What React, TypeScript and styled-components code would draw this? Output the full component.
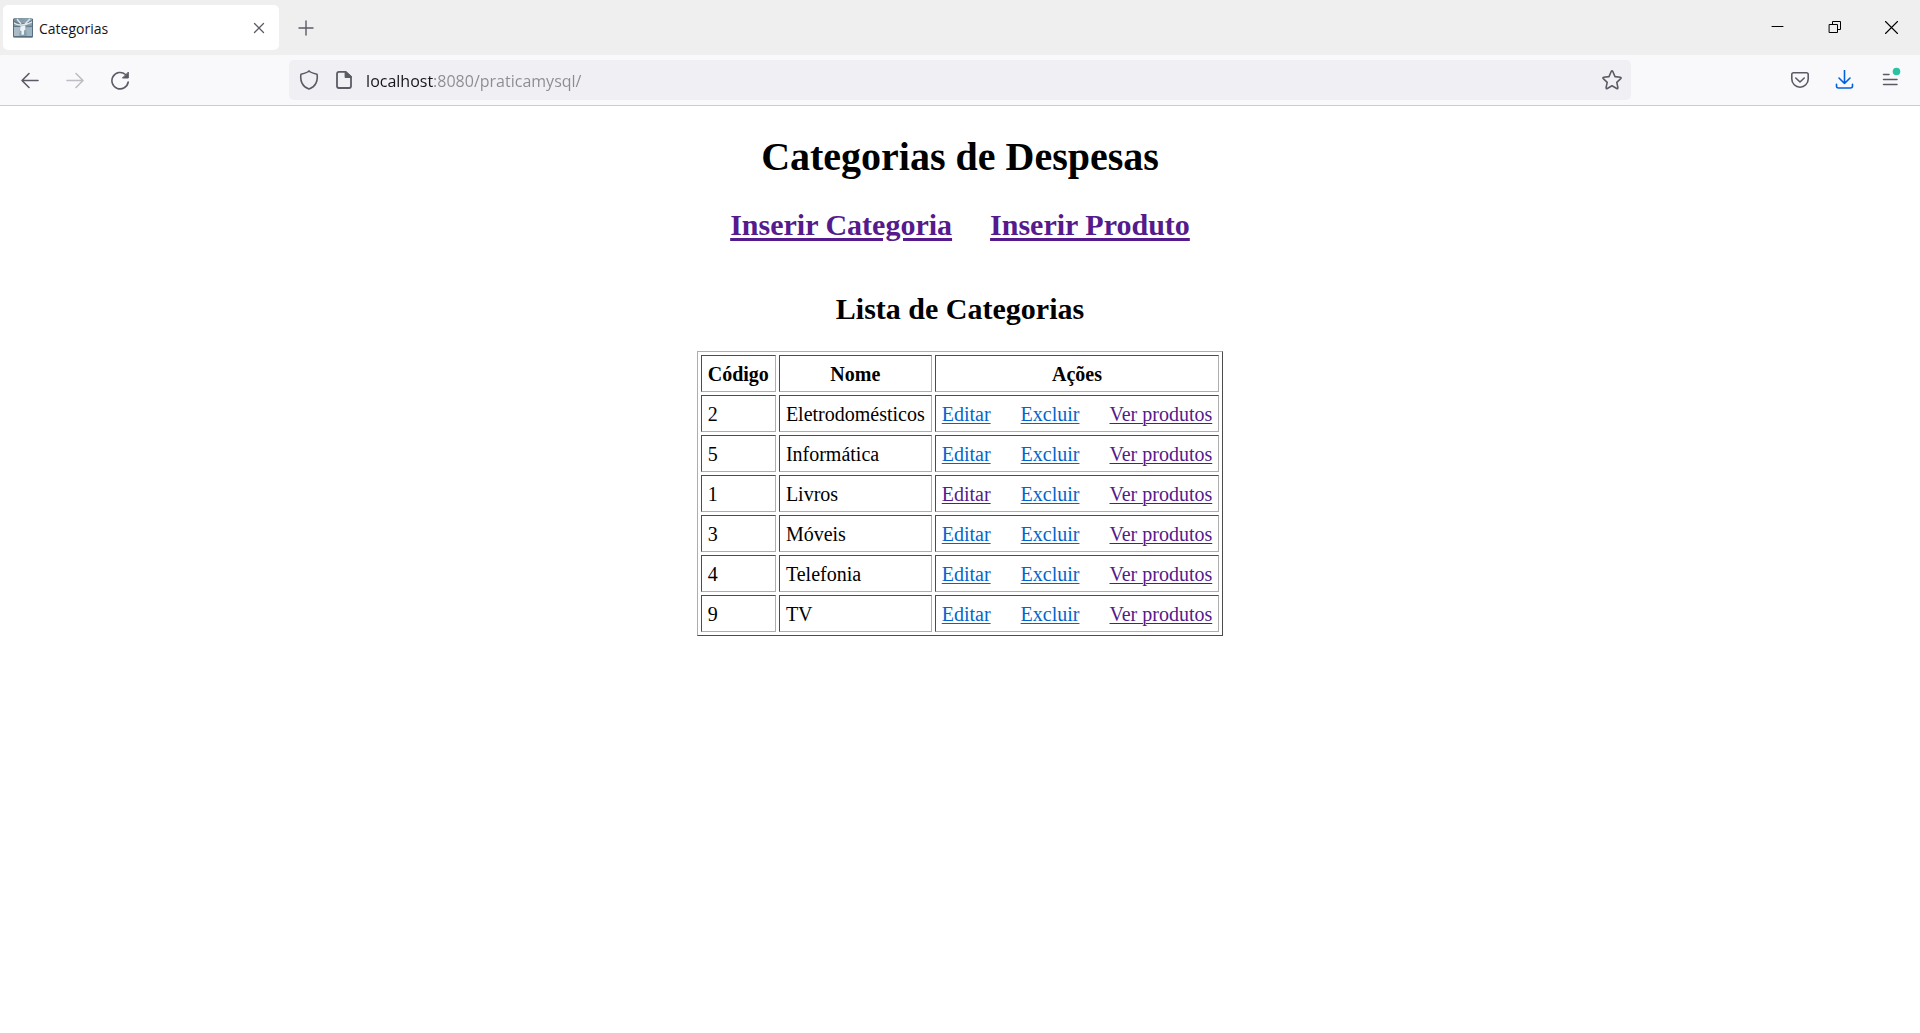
import React from "react";
import styled, { createGlobalStyle } from "styled-components";

const GlobalStyle = createGlobalStyle`
  body {
    margin: 0;
    background: #ffffff;
    color: #000000;
    font-family: "Liberation Serif", "Times New Roman", serif;
    font-size: 20px;
  }
`;

const Chrome = styled.header`
  font-family: "Open Sans", "Segoe UI", sans-serif;
  border-bottom: 1px solid #cccccc;
  background: #f9f9fb;
  color: #5b5b66;
`;

const TabBar = styled.div`
  display: flex;
  align-items: stretch;
  height: 55px;
  background: #efefef;
`;

const Tab = styled.div`
  display: flex;
  align-items: center;
  gap: 6px;
  width: 276px;
  margin: 5px 3px;
  padding: 0 5px 0 10px;
  box-sizing: border-box;
  border-radius: 5px;
  background: #ffffff;
`;

const TabTitle = styled.span`
  flex: 1;
  padding-top: 2px;
  color: #15141a;
  font-size: 14px;
  line-height: 20px;
`;

const IconButton = styled.button<{ $width: number; $color?: string }>`
  display: inline-flex;
  align-items: center;
  justify-content: center;
  width: ${(p) => p.$width}px;
  padding: 0;
  border: 0;
  background: transparent;
  color: ${(p) => p.$color ?? "#5b5b66"};

  &:disabled {
    color: #bdbdc3;
  }
`;

const WindowControls = styled.div`
  display: flex;
  height: 55px;
  margin-left: auto;
`;

const Toolbar = styled.nav`
  display: flex;
  align-items: center;
  height: 50px;
  padding: 0 10px;
`;

const ButtonGroup = styled.div`
  display: flex;
  gap: 5px;
  height: 40px;
`;

const Spring = styled.div`
  flex: 1 1 0;
`;

const AddressBar = styled.div`
  display: flex;
  flex: 9 1 0;
  align-items: stretch;
  min-width: 0;
  height: 40px;
  border-radius: 5px;
  background: #f0f0f4;
`;

const AddressInput = styled.input`
  flex: 1;
  min-width: 0;
  margin-left: 5px;
  padding: 2px 0 0;
  border: 0;
  outline: 0;
  font-family: inherit;
  font-size: 16px;
  color: #8b8b90;
  background: linear-gradient(to right, #15141a 68px, #8b8b90 68px);
  background-clip: text;
  -webkit-background-clip: text;
  -webkit-text-fill-color: transparent;
`;

const Page = styled.main`
  display: flex;
  flex-direction: column;
  align-items: center;
`;

const Title = styled.h1`
  margin: 28px 0;
  font-size: 40px;
  line-height: 46px;
`;

const Link = styled.a<{ $visited?: boolean }>`
  color: ${(p) => (p.$visited ? "#551a8b" : "#0066cc")};
  text-decoration: underline;
  text-decoration-thickness: 1px;
  text-underline-offset: 2px;
`;

const Heading = styled.h2`
  display: flex;
  gap: 38px;
  margin: 0 0 25px;
  font-size: 30px;
  line-height: 34px;

  ${Link} {
    text-decoration-thickness: 3px;
    text-underline-offset: 3px;
  }
`;

const ListSection = styled.section`
  display: flex;
  flex-direction: column;
  align-items: center;
  margin-top: 25px;
`;

const Table = styled.table`
  border: 1px solid;
  border-color: #aeaeae #4c4c4c #4c4c4c #aeaeae;
  border-collapse: separate;
  border-spacing: 3px;
  line-height: 23px;
`;

const HeaderCell = styled.th`
  padding: 7px 6px 5px;
  border: 1px solid;
  border-color: #4c4c4c #aeaeae #aeaeae #4c4c4c;
`;

const Cell = styled.td`
  padding: 7px 6px 5px;
  border: 1px solid;
  border-color: #4c4c4c #aeaeae #aeaeae #4c4c4c;
`;

const Actions = styled.div`
  display: flex;
  gap: 30px;
`;

type IconProps = { size: number; stroke?: number; children: React.ReactNode };

const Icon = ({ size, stroke = 1.6, children }: IconProps) => (
  <svg
    width={size}
    height={size}
    viewBox={`0 0 ${size} ${size}`}
    fill="none"
    stroke="currentColor"
    strokeWidth={stroke}
    strokeLinecap="round"
    strokeLinejoin="round"
    aria-hidden="true"
  >
    {children}
  </svg>
);

const Favicon = () => (
  <svg width="20" height="20" viewBox="0 0 20 20" aria-hidden="true">
    <defs>
      <linearGradient id="fav" x1="0" y1="0" x2="1" y2="1">
        <stop offset="0" stopColor="#7b8d9a" />
        <stop offset="0.5" stopColor="#91a8b6" />
        <stop offset="1" stopColor="#7895a8" />
      </linearGradient>
    </defs>
    <rect width="20" height="20" rx="1.5" fill="url(#fav)" />
    <path d="M0 9l7 0-1 10H0z" fill="#a9bcc7" />
    <path d="M13 10l6-1v9l-5 1z" fill="#9db5c3" />
    <path d="M0 2.500Q4 5.500 9 6T20 2" fill="none" stroke="#5b6d7b" strokeWidth="1" />
    <path d="M0 4.500Q4 7.500 9 7T20 3.500M4 1l4 5M17 1l-5 5" fill="none" stroke="#dfe7eb" strokeWidth="1.300" />
    <path d="M0 8.500h7M13 8l7 .5" stroke="#5f7484" strokeWidth="1" />
    <path d="M7.500 8.500l4.500-1 .5 4-1.500 1v4l-2.500.5v-4l-1.500-.5z" fill="#edf3f5" />
    <path d="M.5 1v17.500h19V1" fill="none" stroke="#5a6d7d" strokeWidth="1" />
  </svg>
);

const categories = [
  { code: 2, name: "Eletrodomésticos" },
  { code: 5, name: "Informática" },
  { code: 1, name: "Livros", edited: true },
  { code: 3, name: "Móveis" },
  { code: 4, name: "Telefonia" },
  { code: 9, name: "TV" },
];

const BrowserChrome = () => (
  <Chrome>
    <TabBar>
      <Tab>
        <Favicon />
        <TabTitle>Categorias</TabTitle>
        <IconButton $width={30} aria-label="Fechar aba">
          <Icon size={20} stroke={1.3}><path d="M5.500 5.500l9 9M14.500 5.500l-9 9" /></Icon>
        </IconButton>
      </Tab>
      <IconButton $width={47} aria-label="Nova aba">
        <Icon size={20} stroke={1.4}><path d="M10 3v14M3 10h14" /></Icon>
      </IconButton>
      <WindowControls>
        <IconButton $width={57} $color="#000000" aria-label="Minimizar">
          <Icon size={13} stroke={1}><path d="M1 5.500h11" /></Icon>
        </IconButton>
        <IconButton $width={57} $color="#000000" aria-label="Restaurar">
          <Icon size={13} stroke={1}>
            <path d="M1.500 3.500h8v8h-8zM4.500 3.500v-3h8v8h-3" strokeLinejoin="miter" />
          </Icon>
        </IconButton>
        <IconButton $width={57} $color="#000000" aria-label="Fechar">
          <Icon size={13} stroke={1.1}><path d="M.5.5l12 12M12.500.5l-12 12" /></Icon>
        </IconButton>
      </WindowControls>
    </TabBar>
    <Toolbar aria-label="Navegação">
      <ButtonGroup>
        <IconButton $width={40} aria-label="Voltar">
          <Icon size={20}><path d="M18 10.500H2M9 3.500l-7 7 7 7" /></Icon>
        </IconButton>
        <IconButton $width={40} aria-label="Avançar" disabled>
          <Icon size={20}><path d="M2 10.500H18M11 3.500l7 7-7 7" /></Icon>
        </IconButton>
        <IconButton $width={40} aria-label="Recarregar">
          <Icon size={20}>
            <path d="M18.200 12A8.200 8.200 0 1 1 15.500 4.500" />
            <path d="M18.300 2.500v5.500h-5.500z" fill="currentColor" strokeWidth="1" />
          </Icon>
        </IconButton>
      </ButtonGroup>
      <Spring />
      <AddressBar>
        <IconButton $width={40} aria-label="Proteção">
          <Icon size={20}>
            <path d="M10 .9Q11 2.500 18 4.200C19.200 11 16.500 17 10 19.100C3.500 17 .8 11 2 4.200Q9 2.500 10 .9z" />
          </Icon>
        </IconButton>
        <IconButton $width={32} aria-label="Informações do site">
          <Icon size={20} stroke={1.8}>
            <path d="M10.500 1.900H4Q2 1.900 2 3.900V16Q2 18 4 18h10Q16 18 16 16V7z" />
            <path d="M10.500 2v5H16z" fill="currentColor" />
          </Icon>
        </IconButton>
        <AddressInput aria-label="Endereço" defaultValue="localhost:8080/praticamysql/" spellCheck={false} />
        <IconButton $width={38} aria-label="Adicionar aos favoritos">
          <Icon size={20}>
            <path d="M9.200 1.500Q10 .3 10.800 1.500L13 6.600l5.300.6q1.400.3.400 1.400l-3.900 3.700 1.100 5.300q.1 1.500-1.200.9L10 15.800l-4.700 2.700q-1.300.6-1.200-.9l1.100-5.300L1.300 8.600q-1-1.100.4-1.400L7 6.600z" />
          </Icon>
        </IconButton>
      </AddressBar>
      <Spring />
      <ButtonGroup>
        <IconButton $width={40} aria-label="Pocket">
          <Icon size={20}>
            <path d="M3.500 2.800h13Q18.200 2.800 18.200 4.500V9a8.200 8.200 0 0 1-16.400 0V4.500Q1.800 2.800 3.500 2.800z" />
            <path d="M5.800 8l4.200 4 4.200-4" />
          </Icon>
        </IconButton>
        <IconButton $width={40} $color="#0061e0" aria-label="Downloads">
          <Icon size={20}>
            <path d="M9.500 .5v13M4 8l5.500 5.500L15 8M1.500 14.300v1.700q0 2 2 2h12q2 0 2-2v-1.700" />
          </Icon>
        </IconButton>
        <IconButton $width={40} aria-label="Menu">
          <Icon size={26} stroke={1.5}>
            <path d="M6.500 7.500H12M6.500 12.500H20M6.500 17.500H20" />
            <circle cx="19.500" cy="4.500" r="3.800" fill="#2ac3a2" stroke="none" />
          </Icon>
        </IconButton>
      </ButtonGroup>
    </Toolbar>
  </Chrome>
);

export default function App() {
  return (
    <>
      <GlobalStyle />
      <BrowserChrome />
      <Page>
        <Title>Categorias de Despesas</Title>
        <Heading>
          <Link href="#inserir-categoria" $visited>Inserir Categoria</Link>
          <Link href="#inserir-produto" $visited>Inserir Produto</Link>
        </Heading>
        <ListSection>
          <Heading>Lista de Categorias</Heading>
          <Table>
            <thead>
              <tr>
                <HeaderCell scope="col">Código</HeaderCell>
                <HeaderCell scope="col">Nome</HeaderCell>
                <HeaderCell scope="col">Ações</HeaderCell>
              </tr>
            </thead>
            <tbody>
              {categories.map((c) => (
                <tr key={c.code}>
                  <Cell>{c.code}</Cell>
                  <Cell>{c.name}</Cell>
                  <Cell>
                    <Actions>
                      <Link href={`#editar-${c.code}`} $visited={c.edited}>Editar</Link>
                      <Link href={`#excluir-${c.code}`}>Excluir</Link>
                      <Link href={`#produtos-${c.code}`} $visited>Ver produtos</Link>
                    </Actions>
                  </Cell>
                </tr>
              ))}
            </tbody>
          </Table>
        </ListSection>
      </Page>
    </>
  );
}
